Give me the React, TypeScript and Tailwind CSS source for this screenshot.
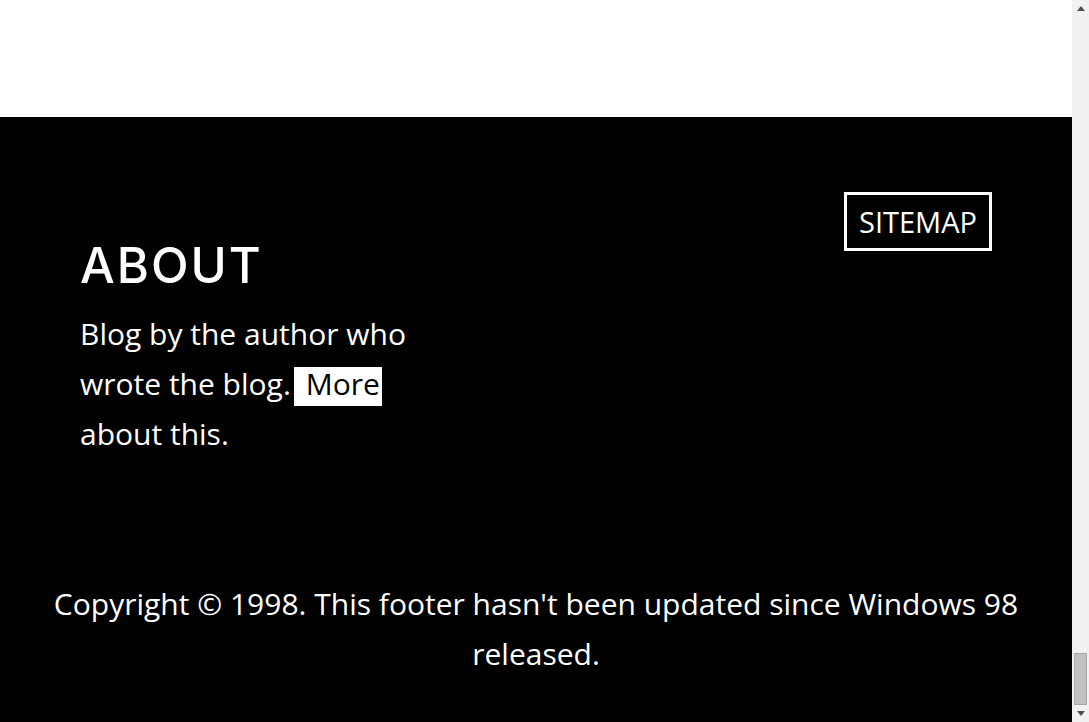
const body = '"Open Sans", "Noto Sans", sans-serif';

function Arrow({ down }: { down?: boolean }) {
  return (
    <div className="flex h-[17px] items-center justify-center">
      <svg width="8" height="5" viewBox="0 0 8 5" className={down ? 'rotate-180' : ''}>
        <polygon points="4,0 8,5 0,5" fill="#505050" />
      </svg>
    </div>
  );
}

function Scrollbar() {
  return (
    <div className="flex h-[722px] w-[17px] shrink-0 flex-col bg-[#f1f1f1]">
      <Arrow />
      <div className="flex flex-1 flex-col justify-end px-[2px]">
        <div className="h-[52px] border border-[#a9a9a9] bg-[#c1c1c1]" />
      </div>
      <Arrow down />
    </div>
  );
}

function AboutBlock() {
  return (
    <div className="mt-[44px] w-[345px]">
      <h2 className="text-[49px] font-medium leading-[60px] tracking-[2px] font-['Inter',sans-serif]">ABOUT</h2>
      <p className="mt-[13px] text-[30px] leading-[50px]" style={{ fontFamily: body }}>
        Blog by the author who wrote the blog.
        <a href="#" className="ml-[3px] inline-block bg-white pb-[6px] pl-[12px] pr-[2px] leading-[33px] text-black">
          More
        </a>{' '}
        about this.
      </p>
    </div>
  );
}

export default function App() {
  return (
    <div className="flex h-[722px] bg-white">
      <div className="flex h-[722px] flex-1 flex-col-reverse overflow-y-auto [scrollbar-width:none]">
        <div className="shrink-0">
          <div className="h-[9000px] bg-white" />
          <footer className="h-[605px] bg-black pt-[75px] text-white" style={{ fontFamily: body }}>
            <div className="flex items-start justify-between px-[80px]">
              <AboutBlock />
              <a href="#" className="border-[3px] border-white px-[12px] py-[6px] text-[29px] leading-[41px]">
                SITEMAP
              </a>
            </div>
            <p className="mt-[120px] px-[36px] text-center text-[30px] leading-[50px]">
              Copyright © 1998. This footer hasn't been updated since Windows 98 released.
            </p>
          </footer>
        </div>
      </div>
      <Scrollbar />
    </div>
  );
}
